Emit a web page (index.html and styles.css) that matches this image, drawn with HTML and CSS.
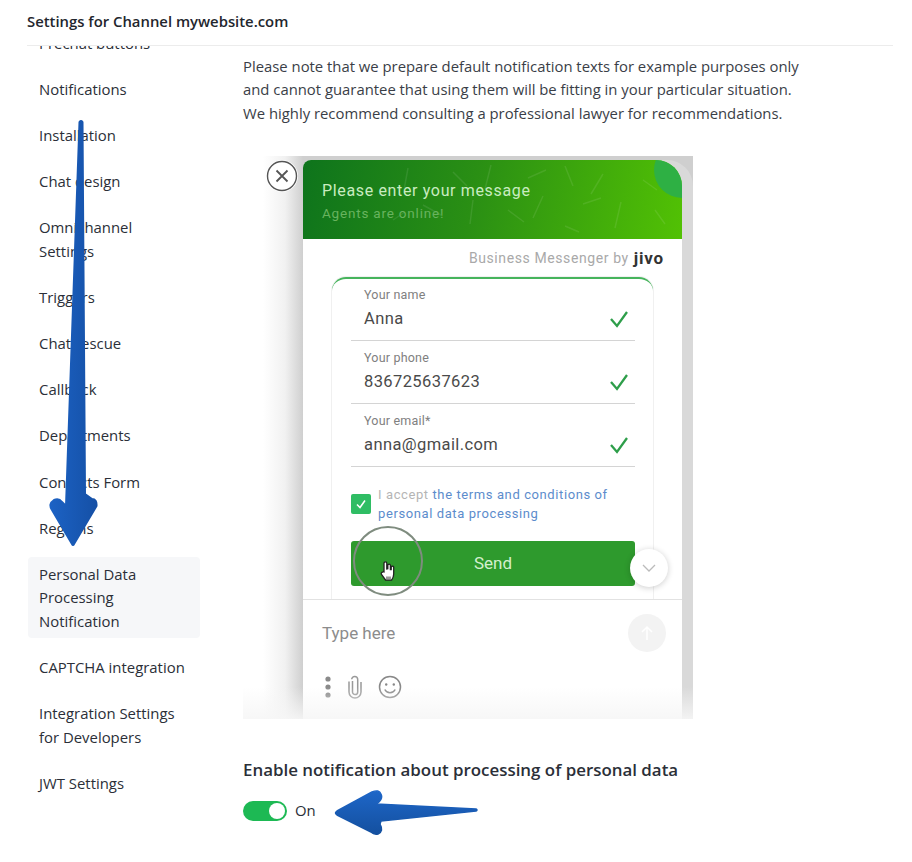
FILE: index.html
```html
<!DOCTYPE html>
<html lang="en">
<head>
    <meta charset="UTF-8">
    <meta name="viewport" content="width=device-width, initial-scale=1.0">
    <title>Settings for Channel mywebsite.com</title>
    <link rel="stylesheet" href="styles.css">
</head>
<body>
    <div class="page">
        <header class="top-bar">Settings for Channel mywebsite.com</header>

        <div class="layout">
            <!-- side menu, scrolled a bit so the first item is cut off -->
            <nav class="side-menu">
                <ul class="menu-list">
                    <li class="menu-item">Prechat buttons</li>
                    <li class="menu-item">Notifications</li>
                    <li class="menu-item">Installation</li>
                    <li class="menu-item">Chat design</li>
                    <li class="menu-item">Omnichannel<br>Settings</li>
                    <li class="menu-item">Triggers</li>
                    <li class="menu-item">Chat rescue</li>
                    <li class="menu-item">Callback</li>
                    <li class="menu-item">Departments</li>
                    <li class="menu-item">Contacts Form</li>
                    <li class="menu-item">Regions</li>
                    <li class="menu-item active">Personal Data<br>Processing<br>Notification</li>
                    <li class="menu-item">CAPTCHA integration</li>
                    <li class="menu-item">Integration Settings<br>for Developers</li>
                    <li class="menu-item">JWT Settings</li>
                </ul>
            </nav>

            <main class="content">
                <p class="note">
                    Please note that we prepare default notification texts for example purposes only<br>
                    and cannot guarantee that using them will be fitting in your particular situation.<br>
                    We highly recommend consulting a professional lawyer for recommendations.
                </p>

                <!-- picture of the chat widget -->
                <div class="shot">
                    <div class="close-btn">
                        <svg width="32" height="32" viewBox="0 0 32 32" fill="none" stroke="#555" stroke-width="1.4">
                            <circle cx="16" cy="16" r="14.5"/>
                            <path d="M10.5 10.5l11 11M21.5 10.5l-11 11" stroke-width="1.8"/>
                        </svg>
                    </div>
                    <div class="widget">
                        <div class="widget-head">
                            <svg class="leaves" width="379" height="79" viewBox="0 0 379 79" fill="none" stroke="#fff" stroke-opacity=".09" stroke-width="1.5">
                                <path d="M105 8l-4 22M150 12l14 14M188 5l-6 24M225 18l18-8M262 6l8 20M300 14l-12 20M340 20l14 10M120 45l18 10M170 40l-3 24M205 50l16 12M240 36l-10 22M280 44l18-6M318 42l-6 26M352 50l10 14M90 60l12-8M262 66l14 6"/>
                            </svg>
                            <div class="corner"></div>
                            <div class="head-title">Please enter your message</div>
                            <div class="head-sub">Agents are online!</div>
                        </div>
                        <div class="brand">Business Messenger by <b class="brand-logo">jivo</b></div>
                        <div class="form-card">
                            <div class="field">
                                <div class="field-label">Your name</div>
                                <div class="field-value">Anna
                                    <svg width="22" height="20" viewBox="0 0 22 20" fill="none" stroke="#2e9e4a" stroke-width="2.3"><path d="M3 10l6 7L19 3"/></svg>
                                </div>
                            </div>
                            <div class="field">
                                <div class="field-label">Your phone</div>
                                <div class="field-value">836725637623
                                    <svg width="22" height="20" viewBox="0 0 22 20" fill="none" stroke="#2e9e4a" stroke-width="2.3"><path d="M3 10l6 7L19 3"/></svg>
                                </div>
                            </div>
                            <div class="field">
                                <div class="field-label">Your email*</div>
                                <div class="field-value">anna@gmail.com
                                    <svg width="22" height="20" viewBox="0 0 22 20" fill="none" stroke="#2e9e4a" stroke-width="2.3"><path d="M3 10l6 7L19 3"/></svg>
                                </div>
                            </div>
                            <div class="accept">
                                <div class="check-box">
                                    <svg width="12" height="12" viewBox="0 0 12 12" fill="none" stroke="#fff" stroke-width="1.5"><path d="M2 6.5l3 3 5-7"/></svg>
                                </div>
                                <div class="accept-text">I accept <span class="accept-link">the terms and conditions of personal data processing</span></div>
                            </div>
                            <div class="send-btn">Send</div>
                        </div>
                        <div class="scroll-down">
                            <svg width="14" height="8" viewBox="0 0 14 8" fill="none" stroke="#bbb" stroke-width="1.3"><path d="M1 1l6 6 6-6"/></svg>
                        </div>
                        <div class="composer">
                            <div class="composer-row">
                                <span>Type here</span>
                                <div class="send-round">
                                    <svg width="14" height="16" viewBox="0 0 14 16" fill="none" stroke="#fff" stroke-width="1.5"><path d="M7 15V2M2 7l5-5 5 5"/></svg>
                                </div>
                            </div>
                            <div class="composer-tools">
                                <svg width="8" height="24" viewBox="0 0 8 24" fill="#8a8a8a"><circle cx="4" cy="4" r="2.6"/><circle cx="4" cy="12" r="2.6"/><circle cx="4" cy="20" r="2.6"/></svg>
                                <svg width="16" height="24" viewBox="0 0 16 24" fill="none" stroke="#999" stroke-width="1.5"><path d="M5.5 6v11a2.6 2.6 0 0 0 5.2 0V4.500a3 3 0 0 0-6-.2M2 6.500V17a6 6 0 0 0 12 0V7"/></svg>
                                <svg width="24" height="24" viewBox="0 0 24 24" fill="none" stroke="#888" stroke-width="1.5"><circle cx="12" cy="12" r="10.500"/><circle cx="8.200" cy="9.500" r="1.200" fill="#888" stroke="none"/><circle cx="15.800" cy="9.500" r="1.200" fill="#888" stroke="none"/><path d="M6.800 14.500a5.800 5.800 0 0 0 10.400 0"/></svg>
                            </div>
                        </div>
                    </div>
                    <div class="shot-fade"></div>
                    <!-- click marker above the send button -->
                    <div class="click-ring"></div>
                    <svg class="hand" width="18" height="22" viewBox="0 0 18 22">
                        <path d="M5 12V3.200a1.400 1.400 0 0 1 2.800 0V9l1-.2V5.500a1.300 1.300 0 0 1 2.600 0V9.500l.8 0V7a1.300 1.300 0 0 1 2.500 0v7c0 3-1 4.500-2 6H6.500L2.500 14.500c-1-1.500.8-3 2.500-2.500z" fill="#fff" stroke="#222" stroke-width="1.300"/>
                        <rect x="7" y="16.500" width="5" height="3" fill="#999"/>
                    </svg>
                </div>

                <h3 class="enable-title">Enable notification about processing of personal data</h3>
                <div class="toggle-row">
                    <div class="toggle"><div class="toggle-knob"></div></div>
                    <span class="toggle-text">On</span>
                </div>
            </main>
        </div>

        <!-- blue hand drawn arrows over the page -->
        <svg class="arrows" width="912" height="862" viewBox="0 0 912 862">
            <defs>
                <linearGradient id="blueDown" x1="0" y1="0" x2="1" y2="0">
                    <stop offset="0" stop-color="#1c62c4"/>
                    <stop offset="1" stop-color="#1550a6"/>
                </linearGradient>
                <linearGradient id="blueLeft" x1="0" y1="0" x2="0" y2="1">
                    <stop offset="0" stop-color="#1e66c8"/>
                    <stop offset="1" stop-color="#14509f"/>
                </linearGradient>
            </defs>
            <path d="M79.500 122Q81 120 82.500 122L85 494L92 499Q97 499 96.500 506L74 544Q73 546 72 544L52 510Q48 504 54 500Q59 498 62 502L66 506z" fill="url(#blueDown)" stroke="url(#blueDown)" stroke-width="2" stroke-linejoin="round"/>
            <path d="M476 809Q478 810 476 811L381 821L380 824Q384 831 378 834Q374 835 371 832L337 815Q334 813 337 811L372 792Q379 789 381 794Q383 798 379 802L376 804z" fill="url(#blueLeft)" stroke="url(#blueLeft)" stroke-width="1.500" stroke-linejoin="round"/>
        </svg>
    </div>
</body>
</html>
```

FILE: styles.css
```css
body {
    margin: 0;
    background: #fff;
    color: #2b2f38;
    font-family: "Open Sans", "Noto Sans", Arial, sans-serif;
    font-size: 14.9px;
}
.page {
    position: relative;
    height: 862px;
    overflow: hidden;
}
.top-bar {
    height: 45px;
    line-height: 43px;
    margin: 0 19px 0 27px;
    border-bottom: 1px solid #ececec;
    font-weight: 600;
    font-size: 14.85px;
    color: #23262d;
}
.layout {
    display: flex;
}

/* side menu */
.side-menu {
    width: 172px;
    height: 816px;
    margin-left: 28px;
    overflow: hidden;
    flex-shrink: 0;
}
.menu-list {
    display: flex;
    flex-direction: column;
    gap: 11.4px;
    list-style: none;
    margin: -20px 0 0;
    padding: 0;
}
.menu-item {
    padding: 5.7px 11px;
    line-height: 23.4px;
}
.menu-item.active {
    margin: -.6px 0 1.4px;
    padding: 6.3px 11px 4.3px;
    background-color: #f6f7f9;
    border-radius: 4px;
}

/* main part */
.content {
    margin-left: 43px;
    width: 620px;
}
.note {
    margin: 9px 0 31px;
    font-size: 14.85px;
    line-height: 23.4px;
    color: #3a3e47;
}
.shot {
    position: relative;
    display: flex;
    width: 450px;
    height: 563px;
    overflow: hidden;
    background: linear-gradient(to right, #fff 0, #fff 20px, #f1f1f1 42px, #cfcfcf 60px);
}
.close-btn {
    position: absolute;
    left: 23px;
    top: 4px;
    width: 32px;
    height: 32px;
    background: #fff;
    border-radius: 50%;
}
.widget {
    position: relative;
    width: 379px;
    height: 559px;
    margin: 4px 0 0 60px;
    background: #fff;
    border-radius: 8px 26px 0 0;
    box-shadow: 11px 0 0 #d9d9d9;
    overflow: hidden;
    font-family: Roboto, Arial, sans-serif;
    color: #555;
}
.widget-head {
    position: relative;
    height: 79px;
    box-sizing: border-box;
    padding: 20px 19px 0;
    background: linear-gradient(100deg, #0e741c 0%, #2a8f14 45%, #52c104 100%);
    overflow: hidden;
}
.leaves {
    position: absolute;
    left: 0;
    top: 0;
}
.corner {
    position: absolute;
    right: -28px;
    top: -18px;
    width: 56px;
    height: 56px;
    border-radius: 50%;
    background: #2eb044;
}
.head-title {
    position: relative;
    font-size: 16px;
    line-height: 21px;
    letter-spacing: .65px;
    color: #c9ecc0;
}
.head-sub {
    position: relative;
    margin-top: 4px;
    font-size: 13.5px;
    letter-spacing: .8px;
    color: #68b35e;
}
.brand {
    display: flex;
    justify-content: flex-end;
    align-items: center;
    gap: 5px;
    height: 38px;
    padding-right: 18px;
    font-size: 14px;
    letter-spacing: .6px;
    color: #a9a9a9;
}
.brand-logo {
    font-size: 17px;
    color: #333;
    letter-spacing: .8px;
}
.form-card {
    width: 321px;
    height: 322px;
    box-sizing: border-box;
    margin-left: 29px;
    padding: 7px 18px 0 19px;
    border-top: 2px solid #46b45c;
    border-radius: 14px 14px 0 0;
    box-shadow: 0 0 0 1px #f0f0f0;
}
.field {
    height: 55px;
    margin-bottom: 8px;
    padding-left: 13px;
    box-sizing: border-box;
    border-bottom: 1px solid #d4d4d4;
}
.field-label {
    font-size: 12.5px;
    line-height: 18px;
    letter-spacing: .2px;
    color: #808080;
}
.field-value {
    display: flex;
    justify-content: space-between;
    align-items: center;
    margin-top: 3px;
    padding-right: 5px;
    font-size: 16.5px;
    line-height: 23px;
    letter-spacing: .4px;
    color: #4a4a4a;
}
.accept {
    display: flex;
    align-items: center;
    gap: 7px;
    margin-top: 18px;
}
.check-box {
    display: flex;
    align-items: center;
    justify-content: center;
    width: 20px;
    height: 20px;
    background: #2fbd64;
    border-radius: 2px;
    flex-shrink: 0;
}
.accept-text {
    width: 250px;
    font-size: 13px;
    line-height: 19px;
    letter-spacing: .6px;
    color: #b5b5b5;
}
.accept-link {
    color: #5c8ccc;
}
.send-btn {
    height: 45px;
    margin-top: 18px;
    background: #2e9a2d;
    border-radius: 3px;
    text-align: center;
    line-height: 45px;
    font-size: 17px;
    color: #d4efcf;
}
.scroll-down {
    position: absolute;
    left: 327px;
    top: 389px;
    display: flex;
    align-items: center;
    justify-content: center;
    width: 38px;
    height: 38px;
    background: #fff;
    border-radius: 50%;
    box-shadow: 0 1px 6px rgba(0, 0, 0, .2);
}
.composer {
    padding: 0 16px 0 19px;
    border-top: 1px solid #e2e2e2;
    height: 120px;
}
.composer-row {
    display: flex;
    justify-content: space-between;
    align-items: center;
    height: 66px;
    font-size: 17px;
    color: #8c8c8c;
}
.send-round {
    display: flex;
    align-items: center;
    justify-content: center;
    width: 38px;
    height: 38px;
    background: #f3f3f3;
    border-radius: 50%;
}
.composer-tools {
    display: flex;
    align-items: center;
    gap: 15px;
    margin-top: 9px;
    padding-left: 2px;
}
.shot-fade {
    position: absolute;
    left: 0;
    right: 0;
    bottom: 0;
    height: 32px;
    background: linear-gradient(to bottom, rgba(255, 255, 255, 0), rgba(246, 246, 246, .9));
}
.click-ring {
    position: absolute;
    left: 110px;
    top: 370px;
    width: 70px;
    height: 70px;
    box-sizing: border-box;
    border: 2px solid #7f8c7f;
    border-radius: 50%;
}
.hand {
    position: absolute;
    left: 136px;
    top: 404px;
}
.enable-title {
    margin: 39px 0 0;
    font-size: 16.9px;
    font-weight: 600;
    line-height: 23px;
    color: #2b2f38;
}
.toggle-row {
    display: flex;
    align-items: center;
    gap: 8px;
    margin-top: 19px;
}
.toggle-text {
    padding-bottom: 2px;
}
.toggle {
    width: 44px;
    height: 20px;
    background: #1db954;
    border-radius: 10px;
    position: relative;
}
.toggle-knob {
    position: absolute;
    right: 2px;
    top: 2px;
    width: 16px;
    height: 16px;
    background: #fff;
    border-radius: 50%;
}
.arrows {
    position: absolute;
    left: 0;
    top: 0;
    pointer-events: none;
}
```
